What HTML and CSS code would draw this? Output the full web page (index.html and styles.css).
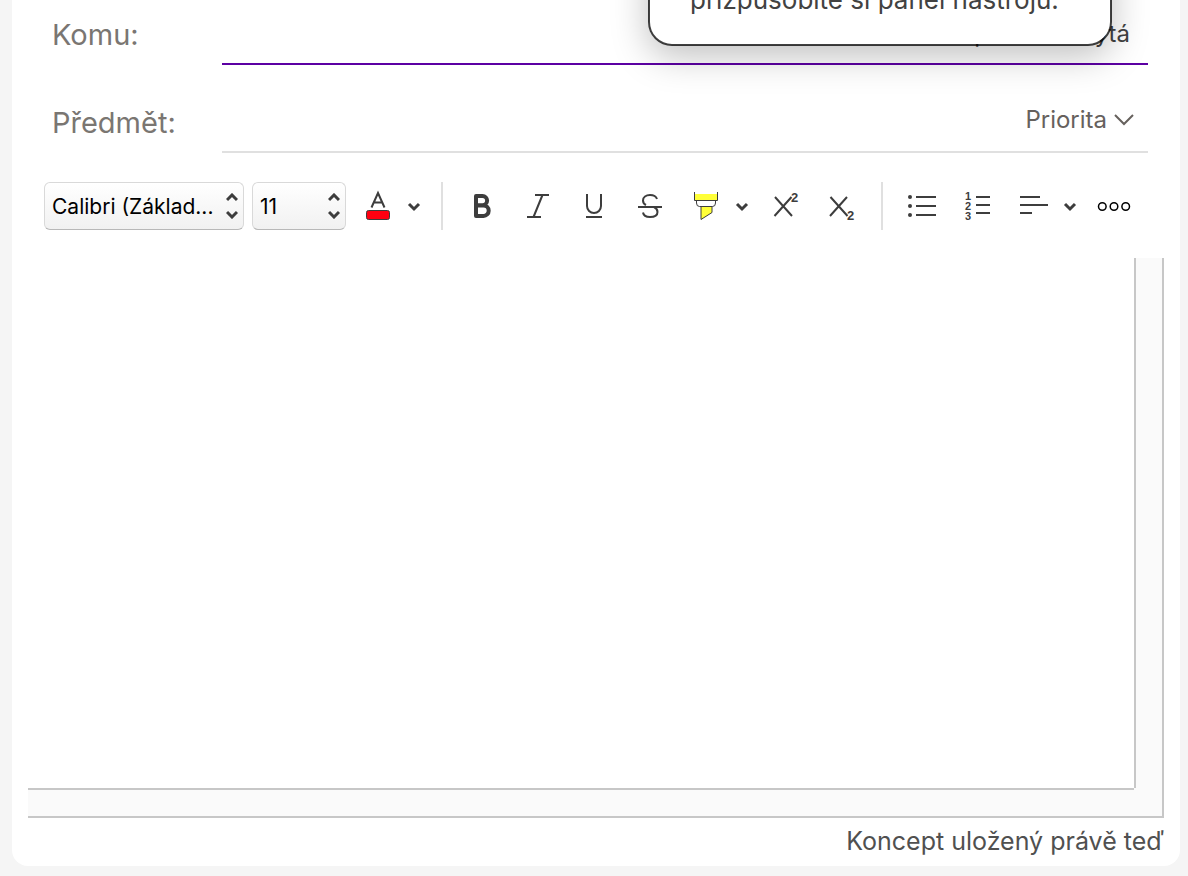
FILE: index.html
```html
<!DOCTYPE html>
<html lang="cs">

<head>
    <meta charset="UTF-8">
    <meta name="viewport" content="width=device-width, initial-scale=1.0">
    <title>Nová zpráva</title>
    <link rel="stylesheet" href="styles.css">
</head>

<body>
    <form class="compose">
        <div class="row row_to">
            <label for="to">Komu:</label>
            <div class="field active">
                <input type="text" id="to">
                <button type="button" class="copy">Kopie</button>
                <button type="button" class="copy">Skrytá</button>
            </div>
        </div>
        <div class="row">
            <label for="subject">Předmět:</label>
            <div class="field">
                <input type="text" id="subject">
                <button type="button" class="priority">Priorita
                    <svg width="20" height="12" viewBox="0 0 20 12"><path d="M1 1l9 9 9-9"/></svg>
                </button>
            </div>
        </div>

        <!-- formatting toolbar -->
        <div class="toolbar">
            <div class="select font_name">
                <select aria-label="Písmo"><option>Calibri (Základ...</option></select>
                <svg width="12" height="26" viewBox="0 0 12 26"><path d="M1 7l5-5 5 5M1 19l5 5 5-5"/></svg>
            </div>
            <div class="select font_size">
                <select aria-label="Velikost písma"><option>11</option></select>
                <svg width="12" height="26" viewBox="0 0 12 26"><path d="M1 7l5-5 5 5M1 19l5 5 5-5"/></svg>
            </div>
            <div class="split">
                <button type="button" class="tool" aria-label="Barva písma">
                    <svg viewBox="0 0 56 48"><path d="M21.500 25.500L28 11l6.500 14.500M24 20.500h8"/><rect class="red" x="16.500" y="28.500" width="23" height="9" rx="2"/></svg>
                </button>
                <button type="button" class="arrow" aria-label="Vybrat barvu písma">
                    <svg viewBox="0 0 16 48"><path d="M3 22l5 5 5-5"/></svg>
                </button>
            </div>
            <span class="line"></span>
            <button type="button" class="tool" aria-label="Tučné">
                <svg viewBox="0 0 56 48"><path class="bold" d="M22 14h6.500a4.600 4.600 0 0 1 0 9.200H22zM22 23.500h7.500a5.200 5.200 0 0 1 0 10.400H22z"/></svg>
            </button>
            <button type="button" class="tool" aria-label="Kurzíva">
                <svg viewBox="0 0 56 48"><path d="M25 13h14M17 35h14M32.500 13l-9 22"/></svg>
            </button>
            <button type="button" class="tool" aria-label="Podtržené">
                <svg viewBox="0 0 56 48"><path d="M21 12v12a7 7 0 0 0 14 0V12M20 35h16"/></svg>
            </button>
            <button type="button" class="tool" aria-label="Přeškrtnuté">
                <svg viewBox="0 0 56 48"><path d="M35 17c-1-3-4-4-7-4-4 0-7 2-7 5.500 0 2 1 3.500 3 4.500M32 25c2 1 3.500 2.500 3.500 5 0 3.500-3.500 5-7.500 5-3.500 0-6.500-1.500-7-4.500M16 25h24"/></svg>
            </button>
            <div class="split">
                <button type="button" class="tool" aria-label="Zvýraznění">
                    <svg viewBox="0 0 56 48"><path class="yellow" d="M17 12h22v7H17zM23 25h11v5.500L23 37.500z"/><path class="thin" d="M16.500 10v8.500h23V10M18.500 19v2q0 3.500 3 3.500h13q3 0 3-3.500v-2M23 24.500v13l11-7v-6"/></svg>
                </button>
                <button type="button" class="arrow" aria-label="Vybrat barvu zvýraznění">
                    <svg viewBox="0 0 16 48"><path d="M3 22l5 5 5-5"/></svg>
                </button>
            </div>
            <button type="button" class="tool" aria-label="Horní index">
                <svg viewBox="0 0 56 48"><path d="M17 15l17 19M33.500 15l-17 19"/><text x="33" y="20">2</text></svg>
            </button>
            <button type="button" class="tool" aria-label="Dolní index">
                <svg viewBox="0 0 56 48"><path d="M16.500 15l17 19M33 15L16 34"/><text x="33" y="38">2</text></svg>
            </button>
            <span class="line"></span>
            <button type="button" class="tool" aria-label="Odrážky">
                <svg viewBox="0 0 56 48"><path d="M22 15h20M22 24h20M22 33h20"/><g class="dots"><circle cx="16" cy="15" r="2"/><circle cx="16" cy="24" r="2"/><circle cx="16" cy="33" r="2"/></g></svg>
            </button>
            <button type="button" class="tool" aria-label="Číslování">
                <svg viewBox="0 0 56 48"><path d="M26 15h14M26 23h14M26 31h14"/><text class="num" x="15" y="18">1</text><text class="num" x="15" y="28">2</text><text class="num" x="15" y="38">3</text></svg>
            </button>
            <div class="split">
                <button type="button" class="tool" aria-label="Zarovnání">
                    <svg viewBox="0 0 56 48"><path d="M14 15h20M14 23h28M14 31h12"/></svg>
                </button>
                <button type="button" class="arrow" aria-label="Vybrat zarovnání">
                    <svg viewBox="0 0 16 48"><path d="M3 22l5 5 5-5"/></svg>
                </button>
            </div>
            <button type="button" class="tool" aria-label="Další možnosti">
                <svg viewBox="0 0 56 48"><g class="more"><circle cx="16.300" cy="24.500" r="3.800"/><circle cx="28" cy="24.500" r="3.800"/><circle cx="39.700" cy="24.500" r="3.800"/></g></svg>
            </button>
        </div>

        <!-- message body with its scroll tracks -->
        <div class="editor">
            <textarea aria-label="Text zprávy"></textarea>
            <div class="track_y"></div>
            <div class="track_x"></div>
            <div class="corner"></div>
        </div>
        <div class="status">Koncept uložený právě teď</div>
    </form>

    <div class="popover">přizpůsobíte si panel nástrojů.</div>
</body>

</html>
```

FILE: styles.css
```css
* {
    margin: 0;
    padding: 0;
    box-sizing: border-box;
}

body {
    position: relative;
    display: flex;
    min-height: 100vh;
    padding: 0 8px 10px 12px;
    overflow: hidden;
    background-color: #f5f5f5;
    font-family: Inter, "Liberation Sans", sans-serif;
    color: #424242;
}

button,
input,
select,
textarea {
    border: 0;
    outline: none;
    background: none;
    font: inherit;
    color: inherit;
}

svg {
    display: block;
    fill: none;
    stroke: #3d3d3d;
    stroke-width: 2;
}

.compose {
    flex: 1;
    display: flex;
    flex-direction: column;
    min-width: 0;
    padding: 0 16px;
    border-radius: 0 0 16px 16px;
    background-color: #fff;
}

.row {
    display: flex;
    height: 88px;
    padding: 0 16px 0 24px;
}

.row_to {
    height: 65px;
}

.row label {
    width: 170px;
    padding-bottom: 12px;
    align-self: flex-end;
    font-size: 29px;
    line-height: 36px;
    color: #7a7672;
}

.field {
    flex: 1;
    display: flex;
    align-items: flex-end;
    gap: 48px;
    padding: 0 14px 15px 0;
    border-bottom: 2px solid #e0e0e0;
}

.field.active {
    padding: 0 18px 13px 0;
    border-color: #5c00a3;
}

.field input {
    flex: 1;
    min-width: 0;
    height: 36px;
    font-size: 24px;
}

.copy,
.priority {
    font-size: 24px;
    line-height: 32px;
}

.priority {
    display: flex;
    align-items: center;
    gap: 7px;
    color: #66615d;
}

.priority svg {
    stroke: #66615d;
}

.toolbar {
    display: flex;
    height: 48px;
    margin: 29px 16px 28px;
}

.select {
    position: relative;
    margin-right: 8px;
}

.select select {
    width: 100%;
    height: 48px;
    padding: 0 24px 0 7px;
    appearance: none;
    border: 1px solid #d9d9d9;
    border-bottom-color: #b8b8b8;
    border-radius: 6px;
    background: linear-gradient(#fff, #f1f1f1);
    font-size: 21px;
    color: #000;
}

/* arrows lie over the select */
.select svg {
    position: absolute;
    top: 11px;
    right: 6px;
    pointer-events: none;
    stroke-width: 3;
}

.font_name {
    width: 200px;
}

.font_size {
    width: 94px;
    margin-right: 4px;
}

.split {
    display: flex;
    margin-right: 8px;
}

.tool {
    width: 56px;
    height: 48px;
}

.arrow {
    width: 16px;
    height: 48px;
}

.arrow svg {
    stroke-width: 3;
}

.line {
    width: 2px;
    margin: 0 11px;
    background-color: #e0e0e0;
}

.tool text {
    fill: #3d3d3d;
    stroke: none;
    font-family: "Liberation Sans", sans-serif;
    font-size: 13px;
    font-weight: 700;
}

.tool .num {
    font-size: 11px;
}

.tool .bold {
    stroke-width: 4;
    stroke-linejoin: round;
}

.tool .thin {
    stroke-width: 1;
}

.tool .yellow {
    fill: #ffff38;
    stroke: none;
}

.tool .red {
    fill: #ff0010;
    stroke-width: 1;
}

.dots {
    fill: #3d3d3d;
    stroke: none;
}

.tool .more {
    stroke: #000;
    stroke-width: 1.5;
}

.editor {
    flex: 1;
    display: grid;
    grid-template-columns: 1fr 30px;
    grid-template-rows: 1fr 30px;
    min-height: 200px;
}

.editor textarea {
    width: 100%;
    height: 100%;
    resize: none;
    font-size: 24px;
}

.track_y,
.track_x,
.corner {
    border: 0 solid #c7c7c7;
    background-color: #fafafa;
}

.track_y {
    border-width: 0 2px;
}

.track_x {
    border-width: 2px 0;
}

.corner {
    border-width: 0 2px 2px 0;
}

.status {
    height: 48px;
    text-align: right;
    font-size: 25px;
    line-height: 46px;
    color: #505050;
}

.popover {
    position: absolute;
    top: -60px;
    right: 76px;
    width: 464px;
    height: 106px;
    padding: 42px 40px 0;
    border: 2px solid rgba(0, 0, 0, .75);
    border-radius: 24px;
    background-color: #fff;
    background-clip: padding-box;
    box-shadow: 0 10px 36px rgba(0, 0, 0, .25);
    font-size: 26px;
    line-height: 32px;
    white-space: nowrap;
}
```
